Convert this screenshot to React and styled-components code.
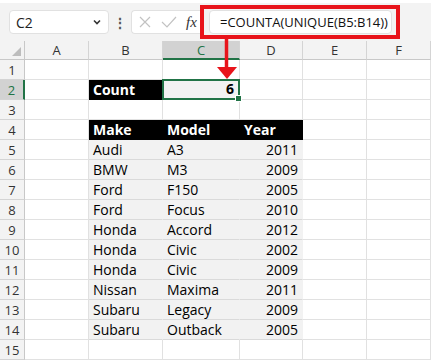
import styled, { createGlobalStyle } from "styled-components";

const GlobalStyle = createGlobalStyle`
  body {
    margin: 0;
    background: #f3f3f3;
    font-family: "Open Sans", "Noto Sans", sans-serif;
  }
`;

const Page = styled.div`
  position: relative;
  width: 431px;
  height: 360px;
  overflow: hidden;
  background: #ffffff;
`;

const Toolbar = styled.div`
  height: 41px;
  background: #f3f3f3;
  border-top: 3px solid #ffffff;
  box-sizing: border-box;
  display: flex;
  align-items: center;
  padding-left: 9px;
`;

const NameBox = styled.div`
  width: 100px;
  height: 24px;
  box-sizing: border-box;
  background: #fff;
  border: 1px solid #e1e1e1;
  border-radius: 4px;
  display: flex;
  align-items: center;
  justify-content: space-between;
  padding: 0 6px 0 6px;
  font-size: 14px;
  color: #222;
`;

const Dots = styled.div`
  width: 22px;
  display: flex;
  justify-content: center;
  color: #555;
  font-size: 14px;
  font-weight: bold;
`;

const FuncBox = styled.div`
  width: 69px;
  height: 24px;
  box-sizing: border-box;
  background: #fff;
  border: 1px solid #e1e1e1;
  border-right: none;
  border-radius: 4px 0 0 4px;
  display: flex;
  align-items: center;
  gap: 9px;
  padding-left: 6px;
`;

const Fx = styled.span`
  font-family: "Liberation Serif", serif;
  font-style: italic;
  font-size: 15px;
  color: #333;
`;

const RedFrame = styled.div`
  width: 200px;
  height: 34px;
  box-sizing: border-box;
  border: 4px solid #e8141b;
  display: flex;
  align-items: center;
  padding-left: 5px;
`;

const FormulaInput = styled.div`
  width: 183px;
  height: 24px;
  box-sizing: border-box;
  background: #fff;
  border: 1px solid #e1e1e1;
  border-radius: 4px;
  display: flex;
  align-items: center;
  padding-left: 10px;
  font-size: 13px;
  color: #111;
  white-space: nowrap;
`;

const Sheet = styled.div`
  display: grid;
  grid-template-columns: 25px 64px 74px 77px 63px 64px 64px;
  grid-template-rows: 19px repeat(15, 20px);
`;

const ColHead = styled.div`
  background: ${(p) => (p.$active ? "#d2d2d2" : "#f3f3f3")};
  color: ${(p) => (p.$active ? "#217346" : "#333")};
  border-right: 1px solid #d4d4d4;
  border-bottom: ${(p) => (p.$active ? "2px solid #217346" : "1px solid #c8c8c8")};
  box-sizing: border-box;
  display: flex;
  align-items: center;
  justify-content: center;
  font-size: 13px;
`;

const Corner = styled.div`
  background: #f3f3f3;
  border-right: 1px solid #c8c8c8;
  border-bottom: 1px solid #c8c8c8;
  box-sizing: border-box;
  position: relative;
  &::after {
    content: "";
    position: absolute;
    right: 3px;
    bottom: 3px;
    border-style: solid;
    border-width: 0 0 9px 9px;
    border-color: transparent transparent #bdbdbd transparent;
  }
`;

const RowHead = styled.div`
  background: ${(p) => (p.$active ? "#d2d2d2" : "#f3f3f3")};
  color: ${(p) => (p.$active ? "#217346" : "#333")};
  border-right: ${(p) => (p.$active ? "2px solid #217346" : "1px solid #c8c8c8")};
  border-bottom: 1px solid #d4d4d4;
  box-sizing: border-box;
  display: flex;
  align-items: center;
  justify-content: center;
  font-size: 13px;
`;

const Cell = styled.div`
  background: ${(p) => p.$bg || "#fff"};
  color: ${(p) => (p.$bg === "#000" ? "#fff" : "#000")};
  font-weight: ${(p) => (p.$bold ? "bold" : "normal")};
  text-align: ${(p) => (p.$right ? "right" : "left")};
  border-right: 1px solid ${(p) => (p.$bg ? p.$bg : "#e1e1e1")};
  border-bottom: 1px solid ${(p) => (p.$bg === "#f2f2f2" ? "#dadada" : p.$bg || "#e1e1e1")};
  box-sizing: border-box;
  padding: 0 4px;
  font-size: 14px;
  line-height: 19px;
  white-space: nowrap;
  overflow: hidden;
`;

const SelCell = styled.div`
  position: relative;
  background: #f2f2f2;
  border: 2px solid #217346;
  margin: -1px 0 0 -1px;
  box-sizing: border-box;
  font-weight: bold;
  font-size: 14px;
  line-height: 16px;
  text-align: right;
  padding-right: 4px;
  &::after {
    content: "";
    position: absolute;
    right: -4px;
    bottom: -4px;
    width: 5px;
    height: 5px;
    background: #217346;
    border: 1px solid #fff;
  }
`;

const Arrow = styled.svg`
  position: absolute;
  left: 215px;
  top: 37px;
`;

const data = [
  ["Audi", "A3", "2011"],
  ["BMW", "M3", "2009"],
  ["Ford", "F150", "2005"],
  ["Ford", "Focus", "2010"],
  ["Honda", "Accord", "2012"],
  ["Honda", "Civic", "2002"],
  ["Honda", "Civic", "2009"],
  ["Nissan", "Maxima", "2011"],
  ["Subaru", "Legacy", "2009"],
  ["Subaru", "Outback", "2005"],
];

const cols = ["A", "B", "C", "D", "E", "F"];

function rowCells(r) {
  if (r === 2) {
    return [
      <Cell key="a" />,
      <Cell key="b" $bg="#000" $bold>Count</Cell>,
      <SelCell key="c">6</SelCell>,
      <Cell key="d" />,
      <Cell key="e" />,
      <Cell key="f" />,
    ];
  }
  if (r === 4) {
    return [
      <Cell key="a" />,
      <Cell key="b" $bg="#000" $bold>Make</Cell>,
      <Cell key="c" $bg="#000" $bold>Model</Cell>,
      <Cell key="d" $bg="#000" $bold>Year</Cell>,
      <Cell key="e" />,
      <Cell key="f" />,
    ];
  }
  if (r >= 5 && r <= 14) {
    const [make, model, year] = data[r - 5];
    return [
      <Cell key="a" />,
      <Cell key="b" $bg="#f2f2f2">{make}</Cell>,
      <Cell key="c" $bg="#f2f2f2">{model}</Cell>,
      <Cell key="d" $bg="#f2f2f2" $right>{year}</Cell>,
      <Cell key="e" />,
      <Cell key="f" />,
    ];
  }
  return cols.map((c) => <Cell key={c} />);
}

export default function App() {
  const rows = Array.from({ length: 15 }, (_, i) => i + 1);
  return (
    <Page>
      <GlobalStyle />
      <Toolbar>
        <NameBox>
          <span>C2</span>
          <svg width="10" height="10" viewBox="0 0 10 10">
            <path d="M2 3.5 L5 6.5 L8 3.5" fill="none" stroke="#333" strokeWidth="1.6" />
          </svg>
        </NameBox>
        <Dots>⋮</Dots>
        <FuncBox>
          <svg width="14" height="14" viewBox="0 0 14 14">
            <path d="M2 2 L12 12 M12 2 L2 12" stroke="#c2c2c2" strokeWidth="1.2" />
          </svg>
          <svg width="16" height="14" viewBox="0 0 16 14">
            <path d="M1 7 L6 12 L15 2" fill="none" stroke="#c2c2c2" strokeWidth="1.2" />
          </svg>
          <Fx>fx</Fx>
        </FuncBox>
        <RedFrame>
          <FormulaInput>=COUNTA(UNIQUE(B5:B14))</FormulaInput>
        </RedFrame>
      </Toolbar>
      <Sheet>
        <Corner />
        {cols.map((c) => (
          <ColHead key={c} $active={c === "C"}>{c}</ColHead>
        ))}
        {rows.map((r) => [
          <RowHead key={"h" + r} $active={r === 2}>{r}</RowHead>,
          ...rowCells(r).map((cell) => ({ ...cell, key: r + "-" + cell.key })),
        ])}
      </Sheet>
      <Arrow width="24" height="44" viewBox="0 0 24 44">
        <path d="M11.5 0 V32" stroke="#e8141b" strokeWidth="3.5" />
        <path d="M2 30 H22 L12 42 Z" fill="#e8141b" />
      </Arrow>
    </Page>
  );
}
